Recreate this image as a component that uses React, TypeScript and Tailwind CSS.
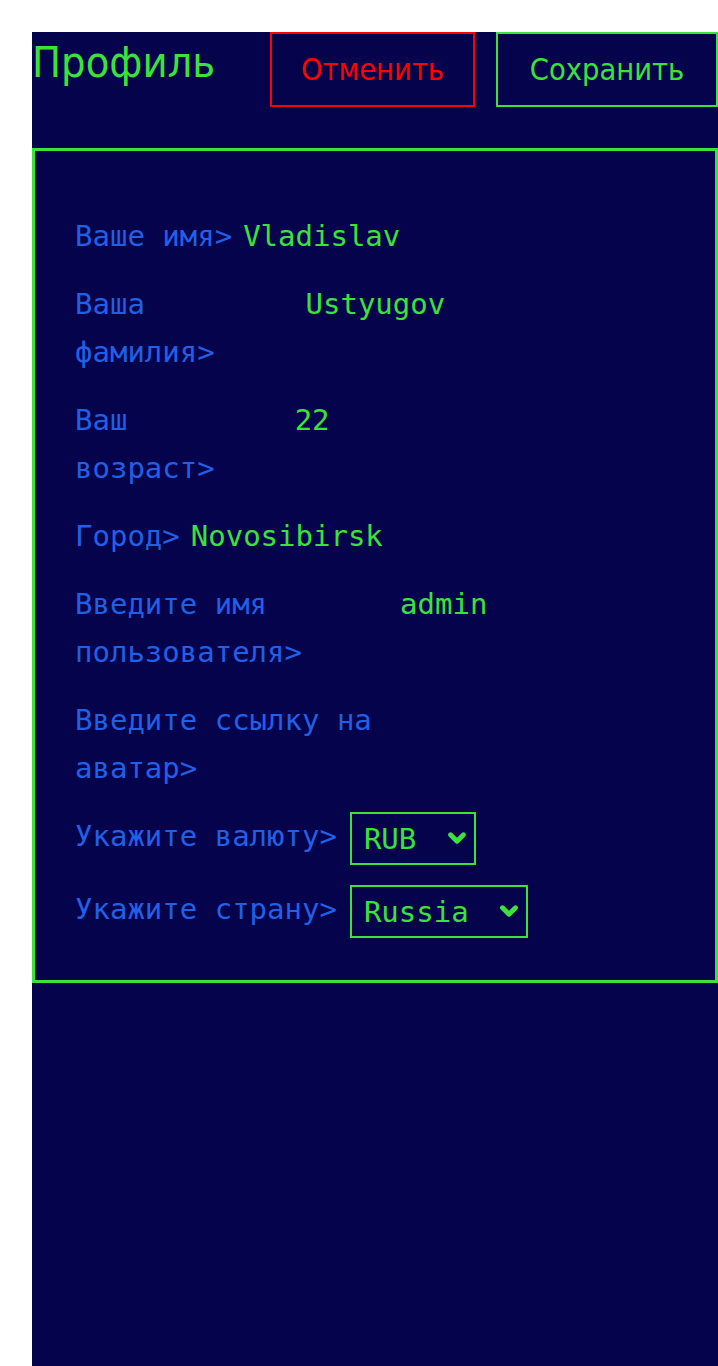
import { ChevronDown } from 'lucide-react';

const fields = [
    { label: 'Ваше имя>', value: 'Vladislav' },
    { label: 'Ваша фамилия>', value: 'Ustyugov' },
    { label: 'Ваш возраст>', value: '22' },
    { label: 'Город>', value: 'Novosibirsk' },
    { label: 'Введите имя пользователя>', value: 'admin' },
    { label: 'Введите ссылку на аватар>', value: '' },
];

function Select({ label, options, width }: { label: string; options: string[]; width: string }) {
    return (
        <div className="flex items-start">
            <span className="shrink-0">{label}</span>
            <div className={`relative ml-[13px] ${width}`}>
                <select
                    defaultValue={options[0]}
                    className="h-[53px] w-full appearance-none border-2 border-[#3ae23a] bg-transparent pl-[12px] text-[#3ae23a] outline-none"
                >
                    {options.map((o) => (
                        <option key={o} value={o} className="bg-[#06034d]">
                            {o}
                        </option>
                    ))}
                </select>
                <ChevronDown
                    className="pointer-events-none absolute right-[6px] top-[12px] h-[28px] w-[26px] text-[#3ae23a]"
                    strokeWidth={4.5}
                />
            </div>
        </div>
    );
}

export default function App() {
    return (
        <div className="min-h-screen bg-white pl-8 pt-8">
            <div className="min-h-[calc(100vh-32px)] bg-[#06034d]">
                {/* Header */}
                <div className="flex items-start font-['DejaVu_Sans',sans-serif] font-stretch-condensed">
                    <h1 className="text-[43px] leading-[60px] text-[#3ae23a]">Профиль</h1>
                    <div className="ml-auto flex gap-[21px] text-[30.5px]">
                        <button className="flex h-[75px] w-[205px] items-center justify-center border-2 border-[#ff0000] text-[#ff0000]">
                            Отменить
                        </button>
                        <button className="flex h-[75px] w-[222px] items-center justify-center border-2 border-[#3ae23a] text-[#3ae23a]">
                            Сохранить
                        </button>
                    </div>
                </div>

                {/* Form */}
                <div className="mt-[41px] flex flex-col gap-5 border-[3px] border-[#3ae23a] px-10 pb-[42px] pt-[61px] font-['DejaVu_Sans_Mono',monospace] text-[29px] leading-[48px] text-[#2060e6]">
                    {fields.map((f) => (
                        <div key={f.label} className="flex items-start">
                            <label>{f.label}</label>
                            <input
                                defaultValue={f.value}
                                className="h-[48px] w-[393px] min-w-0 bg-transparent pl-[11px] text-[#3ae23a] outline-none"
                            />
                        </div>
                    ))}
                    <Select label="Укажите валюту>" options={['RUB', 'USD', 'EUR']} width="w-[126px]" />
                    <Select label="Укажите страну>" options={['Russia', 'Belarus', 'Ukraine']} width="w-[178px]" />
                </div>
            </div>
        </div>
    );
}
